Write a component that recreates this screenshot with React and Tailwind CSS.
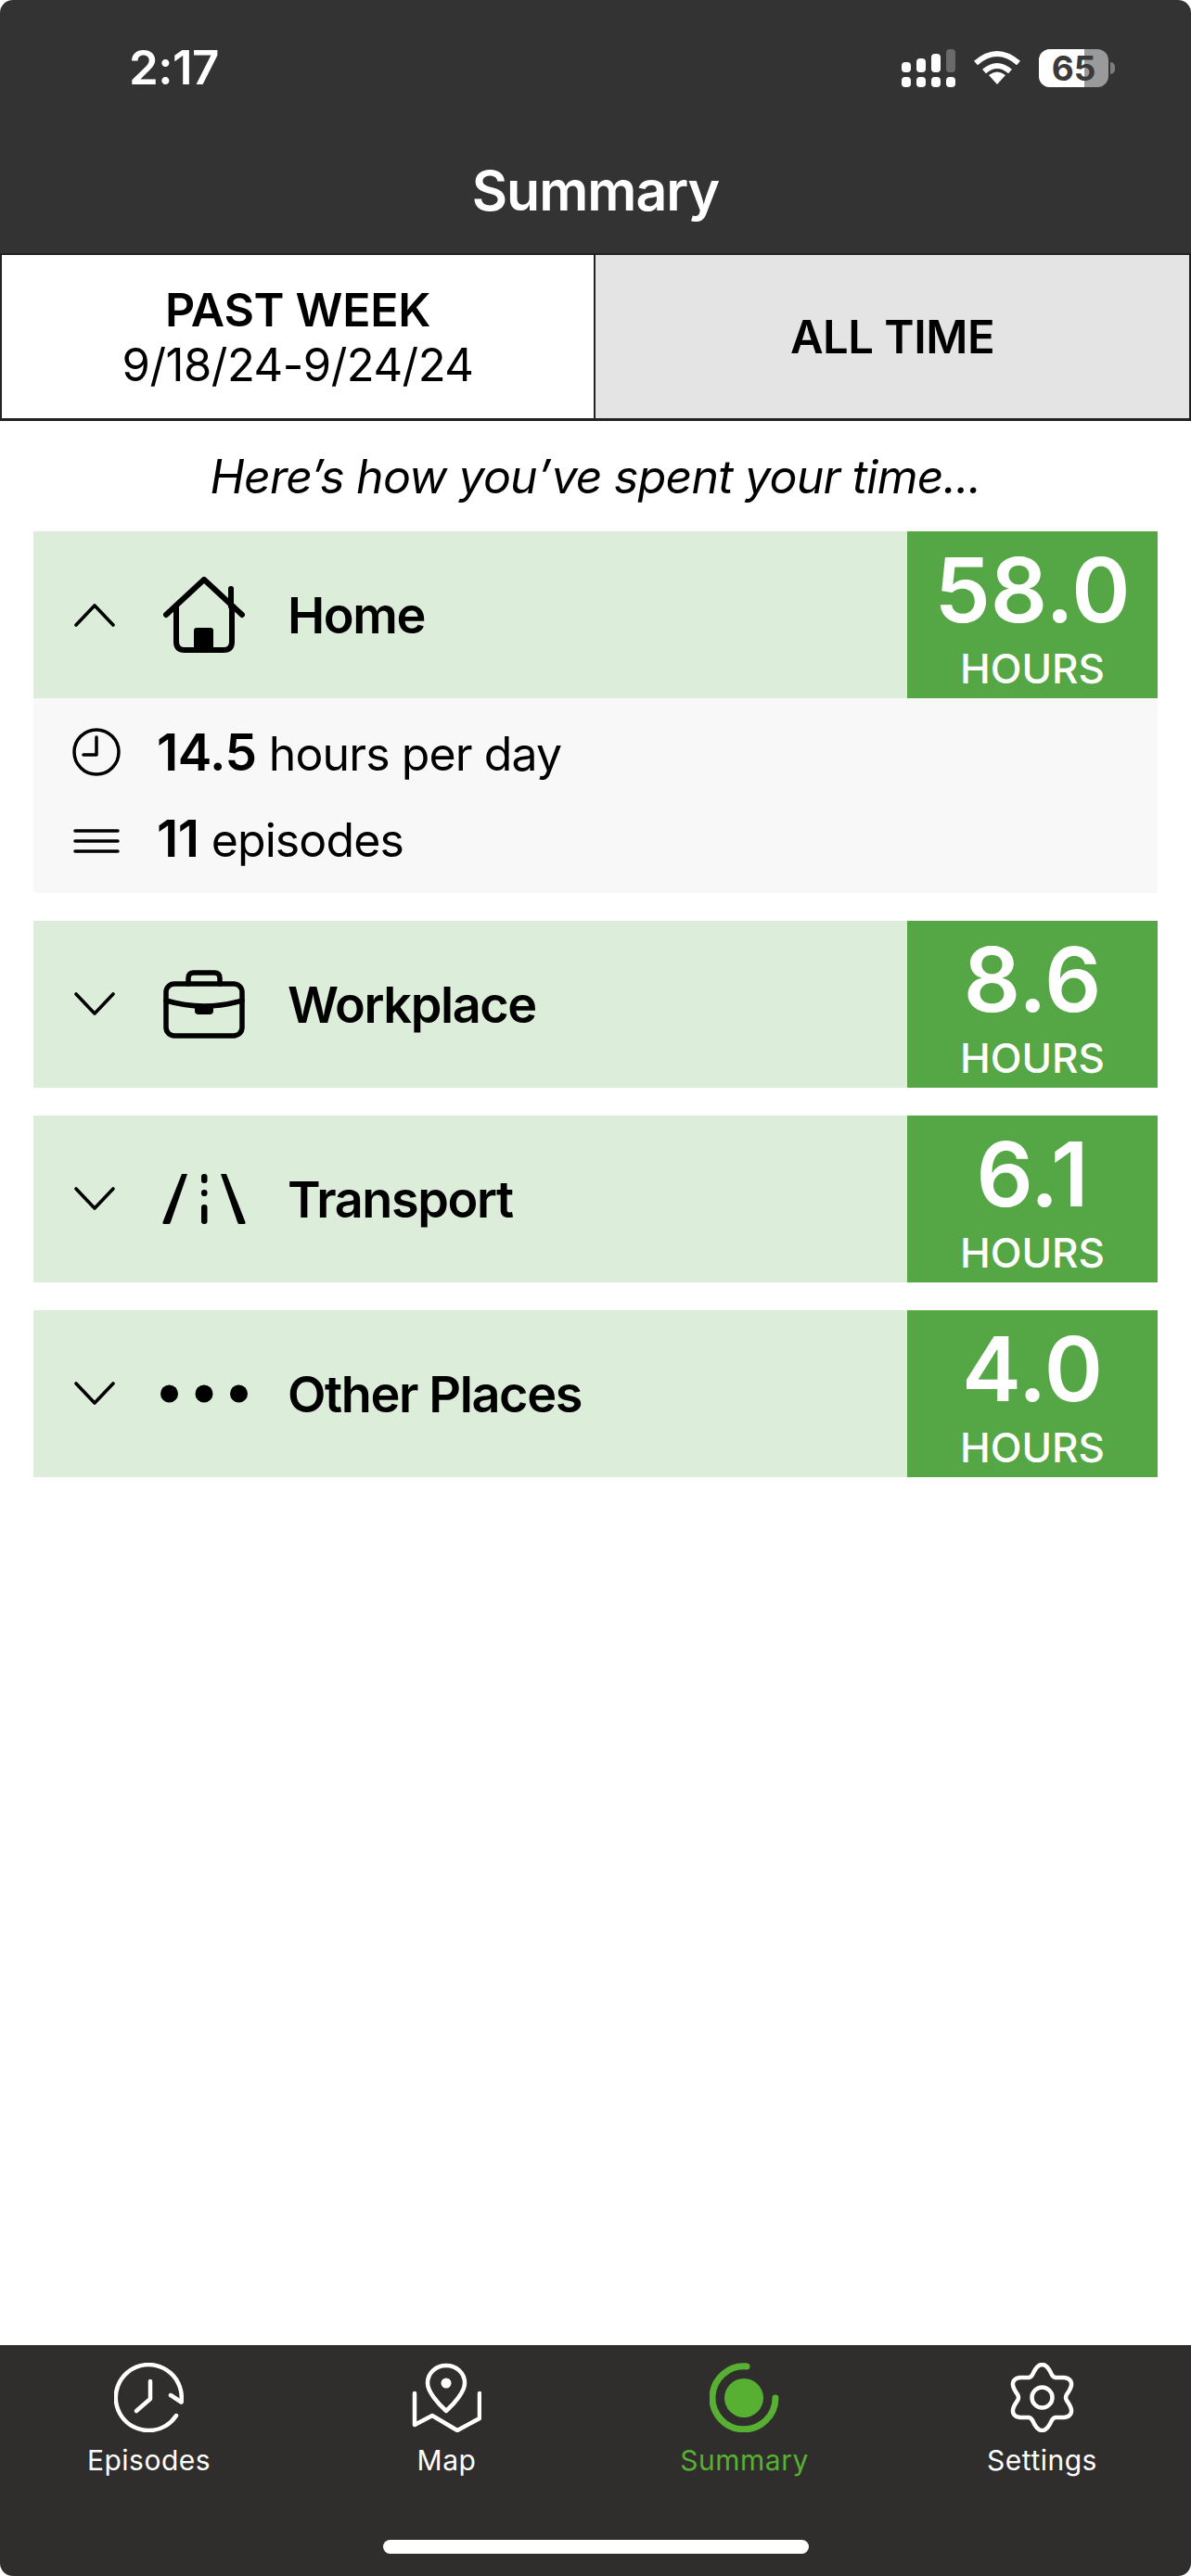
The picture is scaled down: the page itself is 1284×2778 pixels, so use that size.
const font = { fontFamily: 'Inter, "Liberation Sans", sans-serif' }

const gearPath = (() => {
  const pts = []
  for (let i = 0; i < 120; i++) {
    const a = (i / 120) * Math.PI * 2
    const r = 30.5 + 5 * Math.cos(6 * a)
    pts.push(`${(37.5 + r * Math.sin(a)).toFixed(2)} ${(37.5 - r * Math.cos(a)).toFixed(2)}`)
  }
  return `M${pts.join('L')}Z`
})()

function Chevron({ up }) {
  return (
    <svg width="44" height="26" viewBox="0 0 44 26" fill="none" stroke="#000" strokeWidth="3.6" strokeLinecap="round" strokeLinejoin="round">
      <path d={up ? 'M2 24 22 3l20 21' : 'M2 2l20 21L42 2'} />
    </svg>
  )
}

function HomeIcon() {
  return (
    <svg width="88" height="82" viewBox="0 0 88 82" fill="none" stroke="#000" strokeWidth="6" strokeLinecap="round" strokeLinejoin="round">
      <path d="M3 41 44 3l41 38" />
      <path d="M14 32v38q0 9 9 9h42q9 0 9-9V32" />
      <path d="M73 13v19" />
      <path d="M33 58q0-3 3-3h15q3 0 3 3v21H33z" fill="#000" strokeWidth="0" />
    </svg>
  )
}

function CaseIcon() {
  return (
    <svg width="88" height="74" viewBox="0 0 88 74" fill="none" stroke="#000" strokeWidth="5.5" strokeLinecap="round" strokeLinejoin="round">
      <rect x="3" y="15" width="82" height="56" rx="9" />
      <path d="M27 15V9q0-6 6-6h22q6 0 6 6v6" />
      <path d="M3 33q41 12 82 0" />
      <path d="M34 40h20v4q0 4-4 4H38q-4 0-4-4z" fill="#000" strokeWidth="0" />
    </svg>
  )
}

function RoadIcon() {
  return (
    <svg width="90" height="54" viewBox="0 0 90 54" fill="#000">
      <path d="M21 0h6L9 52q-.5 2-2 2H2q-2 0-1.500-2z" />
      <path d="M63 0h6l20.500 52q.5 2-1.500 2h-5q-1.500 0-2-2z" />
      <rect x="42" y="0" width="6.500" height="10" rx="3" />
      <rect x="42" y="17" width="6.500" height="7" rx="3" />
      <rect x="42" y="33" width="6.500" height="21" rx="3" />
    </svg>
  )
}

function DotsIcon() {
  return (
    <svg width="94" height="20" viewBox="0 0 94 20" fill="#000">
      <circle cx="9.500" cy="10" r="9.500" />
      <circle cx="47" cy="10" r="9.500" />
      <circle cx="84.500" cy="10" r="9.500" />
    </svg>
  )
}

function Category({ icon, label, hours, open, children }) {
  return (
    <div>
      <div className="flex h-[180px] items-stretch bg-[#dcedda]">
        <div className="flex w-[132px] shrink-0 items-center justify-center">
          <Chevron up={open} />
        </div>
        <div className="ml-[5px] flex w-[94px] shrink-0 items-center justify-center">{icon}</div>
        <div className="ml-[43px] flex flex-1 items-center text-[54px] font-semibold tracking-[-1.4px] text-black">{label}</div>
        <div className="flex w-[270px] shrink-0 flex-col items-center bg-[#55a746] pt-[24px] text-white">
          <span className="text-[96px] leading-[78px] font-semibold">{hours}</span>
          <span className="mt-[24px] text-[44px] leading-[44px] font-medium">HOURS</span>
        </div>
      </div>
      {children}
    </div>
  )
}

function TabItem({ label, active, children }) {
  return (
    <div className="flex flex-col items-center">
      <svg width="75" height="75" viewBox="0 0 75 75" fill="none" stroke={active ? '#58b033' : '#fff'} strokeWidth="4.500" strokeLinecap="round" strokeLinejoin="round">
        {children}
      </svg>
      <span className={`mt-[8px] text-[30px] leading-[44px] tracking-[0.5px] ${active ? 'text-[#58b033]' : 'text-white'}`}>{label}</span>
    </div>
  )
}

export default function App() {
  return (
    <div style={font} className="flex h-[2778px] w-[1284px] flex-col overflow-hidden rounded-[14px] bg-white">
      {/* Header */}
      <div className="h-[273px] shrink-0 bg-[#333333] text-white">
        <div className="flex h-[146px] items-center justify-between pr-[82px] pl-[139px]">
          <span className="text-[51px] font-semibold tracking-[-0.5px]">2:17</span>
          <div className="flex items-center gap-[19px]">
            <svg width="58" height="41" viewBox="0 0 58 41" fill="#fff">
              <rect x="0" y="14" width="10" height="11" rx="4" />
              <rect x="16" y="10" width="10" height="15" rx="4" />
              <rect x="32" y="5" width="10" height="20" rx="4" />
              <rect x="48" y="0" width="10" height="25" rx="4" fill="#6a6a6a" />
              <rect x="0" y="30" width="10" height="11" rx="4" />
              <rect x="16" y="30" width="10" height="11" rx="4" />
              <rect x="32" y="30" width="10" height="11" rx="4" />
              <rect x="48" y="30" width="10" height="11" rx="4" />
            </svg>
            <svg width="52" height="38" viewBox="0 0 52 38" fill="none" stroke="#fff" strokeWidth="6">
              <path d="M3 14q23-20 46 0" />
              <path d="M12 23q14-12 28 0" />
              <path d="M17 27q9-7 18 0l-9 10z" fill="#fff" strokeWidth="0" />
            </svg>
            <div className="flex items-center gap-[2px]">
              <div className="relative flex h-[41px] w-[75px] items-center justify-center rounded-[12px] bg-[#9a9a9a]">
                <div className="absolute inset-y-0 left-0 w-[49px] rounded-l-[12px] bg-white" />
                <span className="relative text-[37px] leading-[41px] font-bold text-[#3a3a3a]">65</span>
              </div>
              <div className="h-[13px] w-[5px] rounded-r-full bg-[#7d7d7d]" />
            </div>
          </div>
        </div>
        <div className="pt-[24px] text-center text-[59px] leading-[72px] font-semibold tracking-[-1px]">Summary</div>
      </div>

      {/* Range tabs */}
      <div className="grid h-[181px] shrink-0 grid-cols-2 border-x-2 border-t-2 border-b-[3px] border-[#222222] text-black">
        <div className="flex flex-col items-center justify-center border-r-2 border-[#222222] bg-white pt-[1px]">
          <span className="text-[50px] leading-[60px] font-semibold tracking-[-0.3px]">PAST WEEK</span>
          <span className="text-[49px] leading-[60px] tracking-[-0.5px]">9/18/24-9/24/24</span>
        </div>
        <div className="flex items-center justify-center bg-[#e4e4e4] pt-[2px] text-[49px] font-semibold tracking-[-0.5px]">ALL TIME</div>
      </div>

      {/* Body */}
      <main className="flex-1 px-[36px]">
        <p className="pt-[30px] pb-[29px] text-center text-[50px] leading-[60px] tracking-[-0.8px] text-black italic">
          Here’s how you’ve spent your time...
        </p>
        <div className="flex flex-col gap-[30px]">
          <Category icon={<HomeIcon />} label="Home" hours="58.0" open>
            <div className="flex h-[210px] flex-col justify-center gap-[31px] bg-[#f8f8f8] pt-[1px] pl-[133px] text-[50px] leading-[60px] tracking-[-0.9px] text-black">
              <div className="relative">
                <svg className="absolute top-[4px] left-[-91px]" width="52" height="52" viewBox="0 0 52 52" fill="none" stroke="#000" strokeWidth="3.500" strokeLinecap="round" strokeLinejoin="round">
                  <circle cx="26" cy="26" r="24" />
                  <path d="M26 10v19H12" />
                </svg>
                <b className="text-[55px] font-semibold tracking-[-0.5px]">14.5</b> hours per day
              </div>
              <div className="relative">
                <svg className="absolute top-[19px] left-[-90px]" width="50" height="28" viewBox="0 0 50 28" fill="none" stroke="#000" strokeWidth="3.500" strokeLinecap="round">
                  <path d="M2 3h46M2 14h46M2 25h46" />
                </svg>
                <b className="text-[55px] font-semibold tracking-[-0.5px]">11</b> episodes
              </div>
            </div>
          </Category>
          <Category icon={<CaseIcon />} label="Workplace" hours="8.6" />
          <Category icon={<RoadIcon />} label="Transport" hours="6.1" />
          <Category icon={<DotsIcon />} label="Other Places" hours="4.0" />
        </div>
      </main>

      {/* Tab bar */}
      <nav className="h-[249px] shrink-0 bg-[#2f2e2d] pt-[19px]">
        <div className="grid grid-cols-4">
          <TabItem label="Episodes">
            <path d="M67 57A35.500 35.500 0 1 1 72.500 42" />
            <path d="M61 35l11.500 7.500" />
            <path d="M39 20v19L24 52" />
          </TabItem>
          <TabItem label="Map">
            <path d="M37 3c-11 0-20 8-20 19 0 9 11 22 20 30 9-8 20-21 20-30 0-11-9-19-20-19z" />
            <circle cx="37" cy="22" r="5.500" fill="#fff" strokeWidth="0" />
            <path d="M3 33v34l19-10 27 16 24-13V33" />
          </TabItem>
          <TabItem label="Summary" active>
            <path d="M40 4A34 34 0 1 0 71 38" strokeWidth="7" />
            <circle cx="37" cy="38" r="21" fill="#58b033" strokeWidth="0" />
          </TabItem>
          <TabItem label="Settings">
            <path d={gearPath} />
            <circle cx="37.500" cy="37.500" r="11" />
          </TabItem>
        </div>
        <div className="mx-auto mt-[64px] h-[15px] w-[459px] rounded-full bg-white" />
      </nav>
    </div>
  )
}
